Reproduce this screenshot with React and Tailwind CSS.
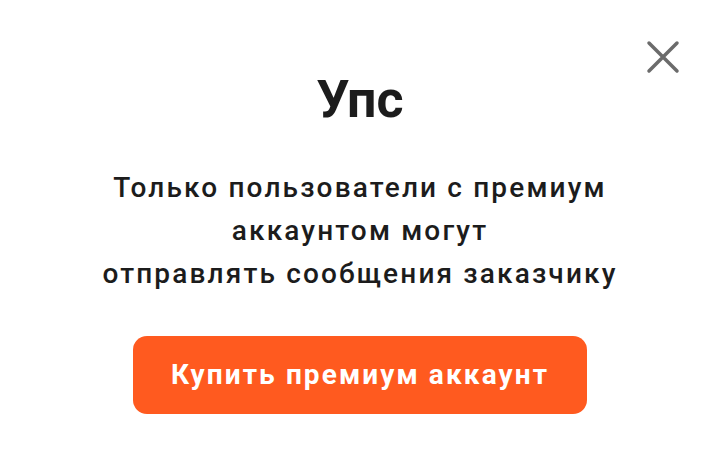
export default function App() {
  return (
    <div className="relative flex h-[460px] w-[720px] flex-col items-center bg-white font-['Roboto',sans-serif]">
      <button className="absolute right-[40px] top-[40px] p-0 text-[#6b6b6b]">
        <svg width="34" height="34" viewBox="0 0 34 34" fill="none">
          <path d="M3 3L31 31M31 3L3 31" stroke="currentColor" strokeWidth="3.5" strokeLinecap="round" />
        </svg>
      </button>

      <h1 className="mt-[68px] text-[52px] font-bold leading-[64px] text-[#1c1c1c]">Упс</h1>

      <p className="mt-[34px] text-center text-[28px] font-medium leading-[43px] tracking-[2.15px] text-[#1c1c1c]">
        Только пользователи с премиум
        <br />
        аккаунтом могут
        <br />
        отправлять сообщения заказчику
      </p>

      <button className="mt-[41px] h-[78px] w-[454px] rounded-[14px] bg-[#ff5a1f] text-[28px] font-bold tracking-[2.1px] text-white">
        Купить премиум аккаунт
      </button>
    </div>
  );
}
